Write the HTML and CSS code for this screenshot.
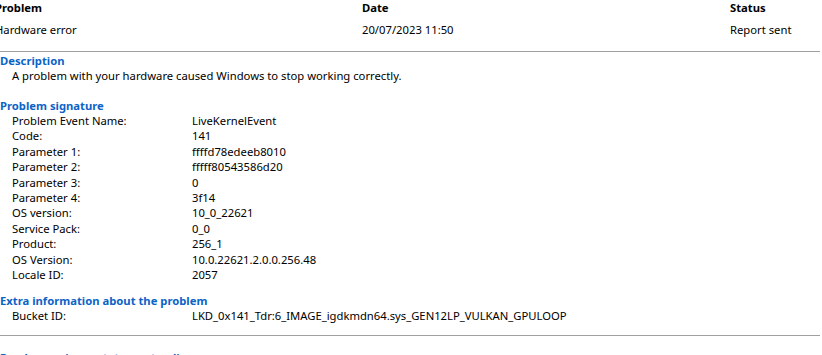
FILE: index.html
```html
<!DOCTYPE html>
<html lang="en">

<head>
    <meta charset="UTF-8">
    <title>Problem Details</title>
    <link rel="stylesheet" href="styles.css">
</head>

<body>
    <div class="report">
        <div class="summary">
            <div class="summary-row heads">
                <span>Problem</span>
                <span>Date</span>
                <span>Status</span>
            </div>
            <div class="summary-row">
                <span>Hardware error</span>
                <span>20/07/2023 11:50</span>
                <span>Report sent</span>
            </div>
        </div>

        <div class="section">
            <h2>Description</h2>
            <p class="desc">A problem with your hardware caused Windows to stop working correctly.</p>
        </div>

        <div class="section">
            <h2>Problem signature</h2>
            <div class="fields">
                <span>Problem Event Name:</span><span>LiveKernelEvent</span>
                <span>Code:</span><span>141</span>
                <span>Parameter 1:</span><span>ffffd78edeeb8010</span>
                <span>Parameter 2:</span><span>fffff80543586d20</span>
                <span>Parameter 3:</span><span>0</span>
                <span>Parameter 4:</span><span>3f14</span>
                <span>OS version:</span><span>10_0_22621</span>
                <span>Service Pack:</span><span>0_0</span>
                <span>Product:</span><span>256_1</span>
                <span>OS Version:</span><span>10.0.22621.2.0.0.256.48</span>
                <span>Locale ID:</span><span>2057</span>
            </div>
        </div>

        <div class="section">
            <h2>Extra information about the problem</h2>
            <div class="fields">
                <span>Bucket ID:</span><span>LKD_0x141_Tdr:6_IMAGE_igdkmdn64.sys_GEN12LP_VULKAN_GPULOOP</span>
            </div>
        </div>

        <div class="divider"></div>

        <div class="section">
            <h2 class="link">Read our privacy statement online</h2>
        </div>
    </div>
</body>

</html>
```

FILE: styles.css
```css
body {
    margin: 0;
    background: #ffffff;
    color: #000000;
    font-family: 'Noto Sans', sans-serif;
    font-size: 11.25px;
    overflow: hidden;
    height: 355px;
}

.report {
    width: 822px;
}

.summary {
    border-bottom: 1px solid #a0a0a0;
    margin-right: 2px;
    padding-bottom: 14px;
}

.summary-row {
    display: grid;
    grid-template-columns: 362px 368px 1fr;
    line-height: 15px;
    margin-bottom: 7px;
    margin-left: -5px;
}

.summary-row span:not(:first-child) {
    margin-left: 5px;
}

.summary-row:last-child {
    margin-bottom: 0;
}

.heads {
    font-weight: 700;
}

.section {
    margin-top: 1px;
}

h2 {
    margin: 0;
    font-size: 11.25px;
    font-weight: 700;
    color: #0c63c7;
    line-height: 15px;
}

.desc {
    margin: 0 0 15px 12px;
    line-height: 15px;
}

.fields {
    display: grid;
    grid-template-columns: 180px 1fr;
    padding-left: 12px;
    line-height: 15.4px;
    margin-bottom: 11px;
}

.divider {
    border-top: 1px solid #a0a0a0;
    margin: 11px 2px 0 0;
}

.divider + .section {
    margin-top: 14px;
}
```
